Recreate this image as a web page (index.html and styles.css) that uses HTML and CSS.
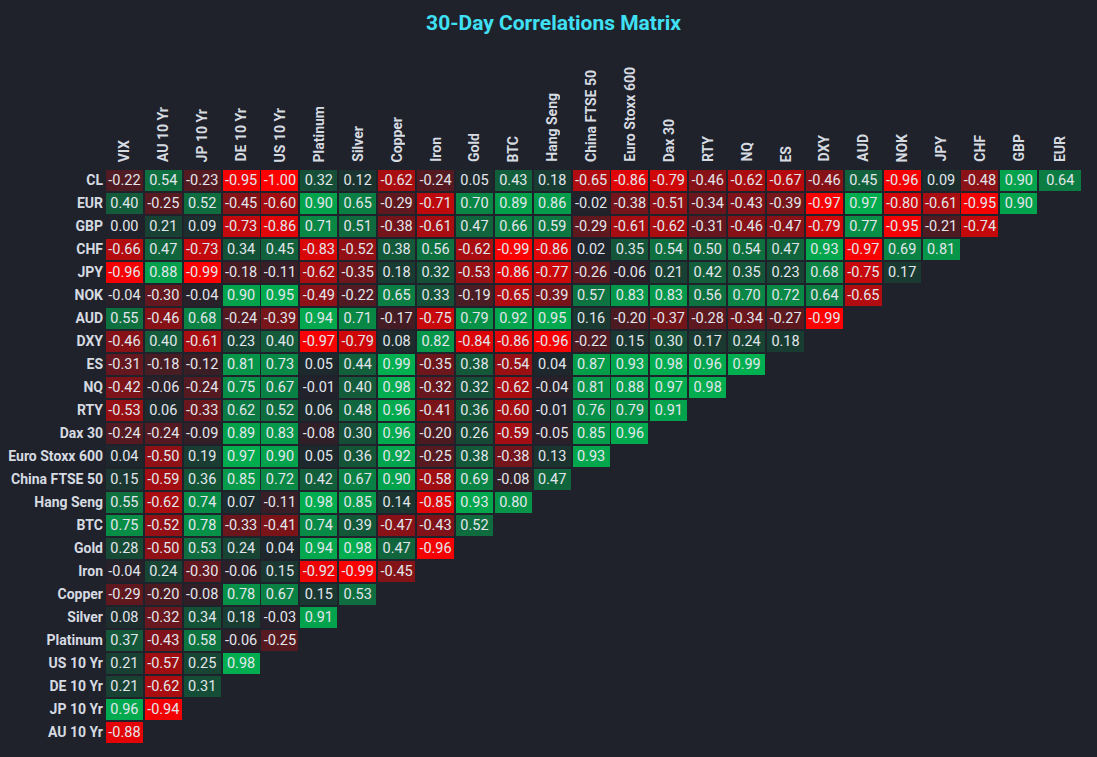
FILE: index.html
```html
<!DOCTYPE html>
<html lang="en">
<head>
<meta charset="utf-8">
<title>30-Day Correlations Matrix</title>
<link rel="stylesheet" href="styles.css">
</head>
<body>
<main class="page">
  <h1 class="title">30-Day Correlations Matrix</h1>
  <div class="matrix">
    <div class="row head">
      <div></div>
      <div class="h"><span>VIX</span></div>
      <div class="h"><span>AU 10 Yr</span></div>
      <div class="h"><span>JP 10 Yr</span></div>
      <div class="h"><span>DE 10 Yr</span></div>
      <div class="h"><span>US 10 Yr</span></div>
      <div class="h"><span>Platinum</span></div>
      <div class="h"><span>Silver</span></div>
      <div class="h"><span>Copper</span></div>
      <div class="h"><span>Iron</span></div>
      <div class="h"><span>Gold</span></div>
      <div class="h"><span>BTC</span></div>
      <div class="h"><span>Hang Seng</span></div>
      <div class="h"><span>China FTSE 50</span></div>
      <div class="h"><span>Euro Stoxx 600</span></div>
      <div class="h"><span>Dax 30</span></div>
      <div class="h"><span>RTY</span></div>
      <div class="h"><span>NQ</span></div>
      <div class="h"><span>ES</span></div>
      <div class="h"><span>DXY</span></div>
      <div class="h"><span>AUD</span></div>
      <div class="h"><span>NOK</span></div>
      <div class="h"><span>JPY</span></div>
      <div class="h"><span>CHF</span></div>
      <div class="h"><span>GBP</span></div>
      <div class="h"><span>EUR</span></div>
    </div>

    <div class="row"><div class="lbl">CL</div>
      <div class="c n" style="--a:.22">-0.22</div><div class="c p" style="--a:.54">0.54</div><div class="c n" style="--a:.23">-0.23</div><div class="c n" style="--a:.95">-0.95</div><div class="c n" style="--a:1">-1.00</div><div class="c p" style="--a:.32">0.32</div><div class="c p" style="--a:.12">0.12</div><div class="c n" style="--a:.62">-0.62</div><div class="c n" style="--a:.24">-0.24</div><div class="c p" style="--a:.05">0.05</div><div class="c p" style="--a:.43">0.43</div><div class="c p" style="--a:.18">0.18</div><div class="c n" style="--a:.65">-0.65</div><div class="c n" style="--a:.86">-0.86</div><div class="c n" style="--a:.79">-0.79</div><div class="c n" style="--a:.46">-0.46</div><div class="c n" style="--a:.62">-0.62</div><div class="c n" style="--a:.67">-0.67</div><div class="c n" style="--a:.46">-0.46</div><div class="c p" style="--a:.45">0.45</div><div class="c n" style="--a:.96">-0.96</div><div class="c p" style="--a:.09">0.09</div><div class="c n" style="--a:.48">-0.48</div><div class="c p" style="--a:.90">0.90</div><div class="c p" style="--a:.64">0.64</div>
    </div>
    <div class="row"><div class="lbl">EUR</div>
      <div class="c p" style="--a:.40">0.40</div><div class="c n" style="--a:.25">-0.25</div><div class="c p" style="--a:.52">0.52</div><div class="c n" style="--a:.45">-0.45</div><div class="c n" style="--a:.60">-0.60</div><div class="c p" style="--a:.90">0.90</div><div class="c p" style="--a:.65">0.65</div><div class="c n" style="--a:.29">-0.29</div><div class="c n" style="--a:.71">-0.71</div><div class="c p" style="--a:.70">0.70</div><div class="c p" style="--a:.89">0.89</div><div class="c p" style="--a:.86">0.86</div><div class="c n" style="--a:.02">-0.02</div><div class="c n" style="--a:.38">-0.38</div><div class="c n" style="--a:.51">-0.51</div><div class="c n" style="--a:.34">-0.34</div><div class="c n" style="--a:.43">-0.43</div><div class="c n" style="--a:.39">-0.39</div><div class="c n" style="--a:.97">-0.97</div><div class="c p" style="--a:.97">0.97</div><div class="c n" style="--a:.80">-0.80</div><div class="c n" style="--a:.61">-0.61</div><div class="c n" style="--a:.95">-0.95</div><div class="c p" style="--a:.90">0.90</div>
    </div>
    <div class="row"><div class="lbl">GBP</div>
      <div class="c p" style="--a:0">0.00</div><div class="c p" style="--a:.21">0.21</div><div class="c p" style="--a:.09">0.09</div><div class="c n" style="--a:.73">-0.73</div><div class="c n" style="--a:.86">-0.86</div><div class="c p" style="--a:.71">0.71</div><div class="c p" style="--a:.51">0.51</div><div class="c n" style="--a:.38">-0.38</div><div class="c n" style="--a:.61">-0.61</div><div class="c p" style="--a:.47">0.47</div><div class="c p" style="--a:.66">0.66</div><div class="c p" style="--a:.59">0.59</div><div class="c n" style="--a:.29">-0.29</div><div class="c n" style="--a:.61">-0.61</div><div class="c n" style="--a:.62">-0.62</div><div class="c n" style="--a:.31">-0.31</div><div class="c n" style="--a:.46">-0.46</div><div class="c n" style="--a:.47">-0.47</div><div class="c n" style="--a:.79">-0.79</div><div class="c p" style="--a:.77">0.77</div><div class="c n" style="--a:.95">-0.95</div><div class="c n" style="--a:.21">-0.21</div><div class="c n" style="--a:.74">-0.74</div>
    </div>
    <div class="row"><div class="lbl">CHF</div>
      <div class="c n" style="--a:.66">-0.66</div><div class="c p" style="--a:.47">0.47</div><div class="c n" style="--a:.73">-0.73</div><div class="c p" style="--a:.34">0.34</div><div class="c p" style="--a:.45">0.45</div><div class="c n" style="--a:.83">-0.83</div><div class="c n" style="--a:.52">-0.52</div><div class="c p" style="--a:.38">0.38</div><div class="c p" style="--a:.56">0.56</div><div class="c n" style="--a:.62">-0.62</div><div class="c n" style="--a:.99">-0.99</div><div class="c n" style="--a:.86">-0.86</div><div class="c p" style="--a:.02">0.02</div><div class="c p" style="--a:.35">0.35</div><div class="c p" style="--a:.54">0.54</div><div class="c p" style="--a:.50">0.50</div><div class="c p" style="--a:.54">0.54</div><div class="c p" style="--a:.47">0.47</div><div class="c p" style="--a:.93">0.93</div><div class="c n" style="--a:.97">-0.97</div><div class="c p" style="--a:.69">0.69</div><div class="c p" style="--a:.81">0.81</div>
    </div>
    <div class="row"><div class="lbl">JPY</div>
      <div class="c n" style="--a:.96">-0.96</div><div class="c p" style="--a:.88">0.88</div><div class="c n" style="--a:.99">-0.99</div><div class="c n" style="--a:.18">-0.18</div><div class="c n" style="--a:.11">-0.11</div><div class="c n" style="--a:.62">-0.62</div><div class="c n" style="--a:.35">-0.35</div><div class="c p" style="--a:.18">0.18</div><div class="c p" style="--a:.32">0.32</div><div class="c n" style="--a:.53">-0.53</div><div class="c n" style="--a:.86">-0.86</div><div class="c n" style="--a:.77">-0.77</div><div class="c n" style="--a:.26">-0.26</div><div class="c n" style="--a:.06">-0.06</div><div class="c p" style="--a:.21">0.21</div><div class="c p" style="--a:.42">0.42</div><div class="c p" style="--a:.35">0.35</div><div class="c p" style="--a:.23">0.23</div><div class="c p" style="--a:.68">0.68</div><div class="c n" style="--a:.75">-0.75</div><div class="c p" style="--a:.17">0.17</div>
    </div>
    <div class="row"><div class="lbl">NOK</div>
      <div class="c n" style="--a:.04">-0.04</div><div class="c n" style="--a:.30">-0.30</div><div class="c n" style="--a:.04">-0.04</div><div class="c p" style="--a:.90">0.90</div><div class="c p" style="--a:.95">0.95</div><div class="c n" style="--a:.49">-0.49</div><div class="c n" style="--a:.22">-0.22</div><div class="c p" style="--a:.65">0.65</div><div class="c p" style="--a:.33">0.33</div><div class="c n" style="--a:.19">-0.19</div><div class="c n" style="--a:.65">-0.65</div><div class="c n" style="--a:.39">-0.39</div><div class="c p" style="--a:.57">0.57</div><div class="c p" style="--a:.83">0.83</div><div class="c p" style="--a:.83">0.83</div><div class="c p" style="--a:.56">0.56</div><div class="c p" style="--a:.70">0.70</div><div class="c p" style="--a:.72">0.72</div><div class="c p" style="--a:.64">0.64</div><div class="c n" style="--a:.65">-0.65</div>
    </div>
    <div class="row"><div class="lbl">AUD</div>
      <div class="c p" style="--a:.55">0.55</div><div class="c n" style="--a:.46">-0.46</div><div class="c p" style="--a:.68">0.68</div><div class="c n" style="--a:.24">-0.24</div><div class="c n" style="--a:.39">-0.39</div><div class="c p" style="--a:.94">0.94</div><div class="c p" style="--a:.71">0.71</div><div class="c n" style="--a:.17">-0.17</div><div class="c n" style="--a:.75">-0.75</div><div class="c p" style="--a:.79">0.79</div><div class="c p" style="--a:.92">0.92</div><div class="c p" style="--a:.95">0.95</div><div class="c p" style="--a:.16">0.16</div><div class="c n" style="--a:.20">-0.20</div><div class="c n" style="--a:.37">-0.37</div><div class="c n" style="--a:.28">-0.28</div><div class="c n" style="--a:.34">-0.34</div><div class="c n" style="--a:.27">-0.27</div><div class="c n" style="--a:.99">-0.99</div>
    </div>
    <div class="row"><div class="lbl">DXY</div>
      <div class="c n" style="--a:.46">-0.46</div><div class="c p" style="--a:.40">0.40</div><div class="c n" style="--a:.61">-0.61</div><div class="c p" style="--a:.23">0.23</div><div class="c p" style="--a:.40">0.40</div><div class="c n" style="--a:.97">-0.97</div><div class="c n" style="--a:.79">-0.79</div><div class="c p" style="--a:.08">0.08</div><div class="c p" style="--a:.82">0.82</div><div class="c n" style="--a:.84">-0.84</div><div class="c n" style="--a:.86">-0.86</div><div class="c n" style="--a:.96">-0.96</div><div class="c n" style="--a:.22">-0.22</div><div class="c p" style="--a:.15">0.15</div><div class="c p" style="--a:.30">0.30</div><div class="c p" style="--a:.17">0.17</div><div class="c p" style="--a:.24">0.24</div><div class="c p" style="--a:.18">0.18</div>
    </div>
    <div class="row"><div class="lbl">ES</div>
      <div class="c n" style="--a:.31">-0.31</div><div class="c n" style="--a:.18">-0.18</div><div class="c n" style="--a:.12">-0.12</div><div class="c p" style="--a:.81">0.81</div><div class="c p" style="--a:.73">0.73</div><div class="c p" style="--a:.05">0.05</div><div class="c p" style="--a:.44">0.44</div><div class="c p" style="--a:.99">0.99</div><div class="c n" style="--a:.35">-0.35</div><div class="c p" style="--a:.38">0.38</div><div class="c n" style="--a:.54">-0.54</div><div class="c p" style="--a:.04">0.04</div><div class="c p" style="--a:.87">0.87</div><div class="c p" style="--a:.93">0.93</div><div class="c p" style="--a:.98">0.98</div><div class="c p" style="--a:.96">0.96</div><div class="c p" style="--a:.99">0.99</div>
    </div>
    <div class="row"><div class="lbl">NQ</div>
      <div class="c n" style="--a:.42">-0.42</div><div class="c n" style="--a:.06">-0.06</div><div class="c n" style="--a:.24">-0.24</div><div class="c p" style="--a:.75">0.75</div><div class="c p" style="--a:.67">0.67</div><div class="c n" style="--a:.01">-0.01</div><div class="c p" style="--a:.40">0.40</div><div class="c p" style="--a:.98">0.98</div><div class="c n" style="--a:.32">-0.32</div><div class="c p" style="--a:.32">0.32</div><div class="c n" style="--a:.62">-0.62</div><div class="c n" style="--a:.04">-0.04</div><div class="c p" style="--a:.81">0.81</div><div class="c p" style="--a:.88">0.88</div><div class="c p" style="--a:.97">0.97</div><div class="c p" style="--a:.98">0.98</div>
    </div>
    <div class="row"><div class="lbl">RTY</div>
      <div class="c n" style="--a:.53">-0.53</div><div class="c p" style="--a:.06">0.06</div><div class="c n" style="--a:.33">-0.33</div><div class="c p" style="--a:.62">0.62</div><div class="c p" style="--a:.52">0.52</div><div class="c p" style="--a:.06">0.06</div><div class="c p" style="--a:.48">0.48</div><div class="c p" style="--a:.96">0.96</div><div class="c n" style="--a:.41">-0.41</div><div class="c p" style="--a:.36">0.36</div><div class="c n" style="--a:.60">-0.60</div><div class="c n" style="--a:.01">-0.01</div><div class="c p" style="--a:.76">0.76</div><div class="c p" style="--a:.79">0.79</div><div class="c p" style="--a:.91">0.91</div>
    </div>
    <div class="row"><div class="lbl">Dax 30</div>
      <div class="c n" style="--a:.24">-0.24</div><div class="c n" style="--a:.24">-0.24</div><div class="c n" style="--a:.09">-0.09</div><div class="c p" style="--a:.89">0.89</div><div class="c p" style="--a:.83">0.83</div><div class="c n" style="--a:.08">-0.08</div><div class="c p" style="--a:.30">0.30</div><div class="c p" style="--a:.96">0.96</div><div class="c n" style="--a:.20">-0.20</div><div class="c p" style="--a:.26">0.26</div><div class="c n" style="--a:.59">-0.59</div><div class="c n" style="--a:.05">-0.05</div><div class="c p" style="--a:.85">0.85</div><div class="c p" style="--a:.96">0.96</div>
    </div>
    <div class="row"><div class="lbl">Euro Stoxx 600</div>
      <div class="c p" style="--a:.04">0.04</div><div class="c n" style="--a:.50">-0.50</div><div class="c p" style="--a:.19">0.19</div><div class="c p" style="--a:.97">0.97</div><div class="c p" style="--a:.90">0.90</div><div class="c p" style="--a:.05">0.05</div><div class="c p" style="--a:.36">0.36</div><div class="c p" style="--a:.92">0.92</div><div class="c n" style="--a:.25">-0.25</div><div class="c p" style="--a:.38">0.38</div><div class="c n" style="--a:.38">-0.38</div><div class="c p" style="--a:.13">0.13</div><div class="c p" style="--a:.93">0.93</div>
    </div>
    <div class="row"><div class="lbl">China FTSE 50</div>
      <div class="c p" style="--a:.15">0.15</div><div class="c n" style="--a:.59">-0.59</div><div class="c p" style="--a:.36">0.36</div><div class="c p" style="--a:.85">0.85</div><div class="c p" style="--a:.72">0.72</div><div class="c p" style="--a:.42">0.42</div><div class="c p" style="--a:.67">0.67</div><div class="c p" style="--a:.90">0.90</div><div class="c n" style="--a:.58">-0.58</div><div class="c p" style="--a:.69">0.69</div><div class="c n" style="--a:.08">-0.08</div><div class="c p" style="--a:.47">0.47</div>
    </div>
    <div class="row"><div class="lbl">Hang Seng</div>
      <div class="c p" style="--a:.55">0.55</div><div class="c n" style="--a:.62">-0.62</div><div class="c p" style="--a:.74">0.74</div><div class="c p" style="--a:.07">0.07</div><div class="c n" style="--a:.11">-0.11</div><div class="c p" style="--a:.98">0.98</div><div class="c p" style="--a:.85">0.85</div><div class="c p" style="--a:.14">0.14</div><div class="c n" style="--a:.85">-0.85</div><div class="c p" style="--a:.93">0.93</div><div class="c p" style="--a:.80">0.80</div>
    </div>
    <div class="row"><div class="lbl">BTC</div>
      <div class="c p" style="--a:.75">0.75</div><div class="c n" style="--a:.52">-0.52</div><div class="c p" style="--a:.78">0.78</div><div class="c n" style="--a:.33">-0.33</div><div class="c n" style="--a:.41">-0.41</div><div class="c p" style="--a:.74">0.74</div><div class="c p" style="--a:.39">0.39</div><div class="c n" style="--a:.47">-0.47</div><div class="c n" style="--a:.43">-0.43</div><div class="c p" style="--a:.52">0.52</div>
    </div>
    <div class="row"><div class="lbl">Gold</div>
      <div class="c p" style="--a:.28">0.28</div><div class="c n" style="--a:.50">-0.50</div><div class="c p" style="--a:.53">0.53</div><div class="c p" style="--a:.24">0.24</div><div class="c p" style="--a:.04">0.04</div><div class="c p" style="--a:.94">0.94</div><div class="c p" style="--a:.98">0.98</div><div class="c p" style="--a:.47">0.47</div><div class="c n" style="--a:.96">-0.96</div>
    </div>
    <div class="row"><div class="lbl">Iron</div>
      <div class="c n" style="--a:.04">-0.04</div><div class="c p" style="--a:.24">0.24</div><div class="c n" style="--a:.30">-0.30</div><div class="c n" style="--a:.06">-0.06</div><div class="c p" style="--a:.15">0.15</div><div class="c n" style="--a:.92">-0.92</div><div class="c n" style="--a:.99">-0.99</div><div class="c n" style="--a:.45">-0.45</div>
    </div>
    <div class="row"><div class="lbl">Copper</div>
      <div class="c n" style="--a:.29">-0.29</div><div class="c n" style="--a:.20">-0.20</div><div class="c n" style="--a:.08">-0.08</div><div class="c p" style="--a:.78">0.78</div><div class="c p" style="--a:.67">0.67</div><div class="c p" style="--a:.15">0.15</div><div class="c p" style="--a:.53">0.53</div>
    </div>
    <div class="row"><div class="lbl">Silver</div>
      <div class="c p" style="--a:.08">0.08</div><div class="c n" style="--a:.32">-0.32</div><div class="c p" style="--a:.34">0.34</div><div class="c p" style="--a:.18">0.18</div><div class="c n" style="--a:.03">-0.03</div><div class="c p" style="--a:.91">0.91</div>
    </div>
    <div class="row"><div class="lbl">Platinum</div>
      <div class="c p" style="--a:.37">0.37</div><div class="c n" style="--a:.43">-0.43</div><div class="c p" style="--a:.58">0.58</div><div class="c n" style="--a:.06">-0.06</div><div class="c n" style="--a:.25">-0.25</div>
    </div>
    <div class="row"><div class="lbl">US 10 Yr</div>
      <div class="c p" style="--a:.21">0.21</div><div class="c n" style="--a:.57">-0.57</div><div class="c p" style="--a:.25">0.25</div><div class="c p" style="--a:.98">0.98</div>
    </div>
    <div class="row"><div class="lbl">DE 10 Yr</div>
      <div class="c p" style="--a:.21">0.21</div><div class="c n" style="--a:.62">-0.62</div><div class="c p" style="--a:.31">0.31</div>
    </div>
    <div class="row"><div class="lbl">JP 10 Yr</div>
      <div class="c p" style="--a:.96">0.96</div><div class="c n" style="--a:.94">-0.94</div>
    </div>
    <div class="row"><div class="lbl">AU 10 Yr</div>
      <div class="c n" style="--a:.88">-0.88</div>
    </div>
  </div>
</main>
</body>
</html>
```

FILE: styles.css
```css
html, body {
  margin: 0;
  padding: 0;
  background: #1f222b;
}

.page {
  width: 1097px;
  height: 757px;
  font-family: Roboto, "Liberation Sans", sans-serif;
  color: #d6dae1;
}

.title {
  margin: 0;
  padding: 11px 0 0 10px;
  height: 29px;
  text-align: center;
  font-size: 21px;
  line-height: 24px;
  font-weight: 700;
  color: #40e0f4;
}

.matrix {
  display: flex;
  flex-direction: column;
  row-gap: 2px;
}

.row {
  display: grid;
  grid-template-columns: 104px repeat(24, 37px) 42px;
  column-gap: 1.9px;
  height: 21px;
}

.row.head {
  height: 128px;
}

.h {
  display: flex;
  justify-content: center;
  align-items: flex-end;
  padding-bottom: 6px;
}

.h span {
  writing-mode: vertical-rl;
  transform: rotate(180deg);
  font-size: 14px;
  font-weight: 700;
  line-height: 16px;
  white-space: nowrap;
  color: #d6dae1;
}

.lbl {
  text-align: right;
  font-size: 14px;
  font-weight: 700;
  line-height: 21px;
  white-space: nowrap;
  padding-right: 1px;
  color: #d6dae1;
}

.c {
  text-align: center;
  font-family: "Liberation Sans Narrow", Roboto, sans-serif;
  font-size: 14.5px;
  line-height: 21px;
  color: #e2e6ec;
}

.p {
  background: rgb(calc(31 - 31 * var(--a)), calc(34 + 142 * var(--a)), calc(43 + 37 * var(--a)));
}

.n {
  background: rgb(calc(31 + 224 * var(--a)), calc(34 - 34 * var(--a)), calc(43 - 43 * var(--a)));
}
```
